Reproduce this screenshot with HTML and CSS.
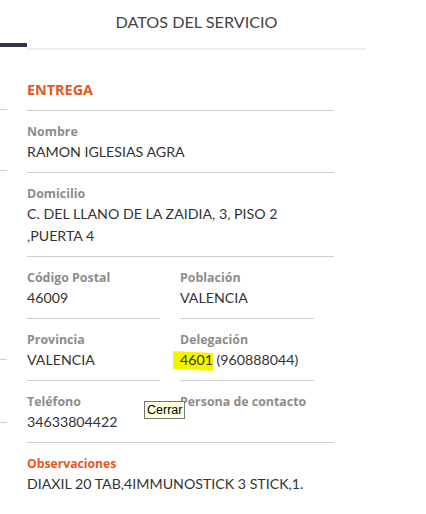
FILE: index.html
```html
<!DOCTYPE html>
<html lang="es">
<head>
<meta charset="utf-8">
<title>Datos del servicio</title>
<link rel="stylesheet" href="styles.css">
</head>
<body>
<div class="page">
  <div class="tabs">
    <div class="tab tab-active"></div>
    <div class="tab">DATOS DEL SERVICIO</div>
  </div>
  <div class="main">
    <div class="side">
      <div class="stub s1"></div>
      <div class="stub s2"></div>
      <div class="stub s3"></div>
      <div class="stub s4"></div>
    </div>
    <div class="content">
      <div class="section-title">ENTREGA</div>
      <div class="field">
        <div class="label">Nombre</div>
        <div class="value">RAMON IGLESIAS AGRA</div>
      </div>
      <div class="field">
        <div class="label">Domicilio</div>
        <div class="value">C. DEL LLANO DE LA ZAIDIA, 3, PISO 2 ,PUERTA 4</div>
      </div>
      <div class="grid">
        <div class="field">
          <div class="label">Código Postal</div>
          <div class="value">46009</div>
        </div>
        <div class="field">
          <div class="label">Población</div>
          <div class="value">VALENCIA</div>
        </div>
        <div class="field">
          <div class="label">Provincia</div>
          <div class="value">VALENCIA</div>
        </div>
        <div class="field">
          <div class="label">Delegación</div>
          <div class="value"><span class="hl">4601</span> (960888044)</div>
        </div>
      </div>
      <div class="field field-row">
        <div class="grid grid-plain">
          <div>
            <div class="label">Teléfono</div>
            <div class="value">34633804422</div>
          </div>
          <div>
            <div class="label">Persona de contacto</div>
            <div class="value"></div>
          </div>
        </div>
      </div>
      <div class="field field-last">
        <div class="label label-accent">Observaciones</div>
        <div class="value">DIAXIL 20 TAB,4IMMUNOSTICK 3 STICK,1.</div>
      </div>
    </div>
  </div>
  <div class="tooltip">Cerrar</div>
</div>
</body>
</html>
```
FILE: styles.css
```css
html, body {
  margin: 0;
  padding: 0;
  background: #ffffff;
}

body {
  font-family: "Open Sans", Lato, sans-serif;
  color: #333333;
}

.page {
  position: relative;
  width: 426px;
  height: 514px;
  overflow: hidden;
}

.tabs {
  display: flex;
  align-items: flex-start;
  height: 50px;
}

.tab {
  box-sizing: border-box;
}

.tab-active {
  width: 27px;
  height: 47px;
  border-bottom: 4px solid #33334a;
}

.tab:not(.tab-active) {
  width: 339px;
  height: 50px;
  line-height: 44px;
  border-bottom: 2px solid #ededed;
  text-align: center;
  font-family: Lato, sans-serif;
  font-size: 16.2px;
  color: #444444;
}

.main {
  display: flex;
  gap: 20px;
}

.side {
  width: 7px;
  flex: none;
}

.stub {
  border-bottom: 1px solid #cfcfcf;
}

.s1 { height: 59px; }
.s2 { height: 60px; }
.s3 { height: 188px; }
.s4 { height: 62px; }

.content {
  width: 307px;
}

.section-title {
  padding: 30px 0 10px;
  line-height: 20px;
  font-size: 14.4px;
  font-weight: 700;
  color: #e8561c;
  border-bottom: 1px solid #cfcfcf;
}

.field {
  padding: 12px 0 9px;
  border-bottom: 1px solid #cfcfcf;
}

.field-row .value {
  min-height: 22px;
}

.field-last {
  border-bottom: none;
}

.label {
  font-size: 12.4px;
  font-weight: 700;
  line-height: 18px;
  color: #8c8c8c;
}

.label-accent {
  font-size: 12.2px;
  color: #e8561c;
}

.value {
  font-family: Lato, sans-serif;
  font-size: 14.2px;
  line-height: 22px;
  color: #333333;
}

.grid {
  display: grid;
  grid-template-columns: 133px 134px;
  column-gap: 20px;
}

.grid-plain .label,
.grid-plain .value {
  white-space: nowrap;
}

.hl {
  position: relative;
  z-index: 0;
}

.hl::before {
  content: "";
  position: absolute;
  left: -7px;
  right: 0;
  top: 1px;
  bottom: -2px;
  background: #f4f400;
  z-index: -1;
  transform: skewY(3deg);
}

.tooltip {
  position: absolute;
  left: 144px;
  top: 401px;
  padding: 0 2px;
  background: #ffffe1;
  border: 1px solid #767676;
  font-family: "Liberation Sans", sans-serif;
  font-size: 12.5px;
  line-height: 16px;
  color: #000000;
}
```
